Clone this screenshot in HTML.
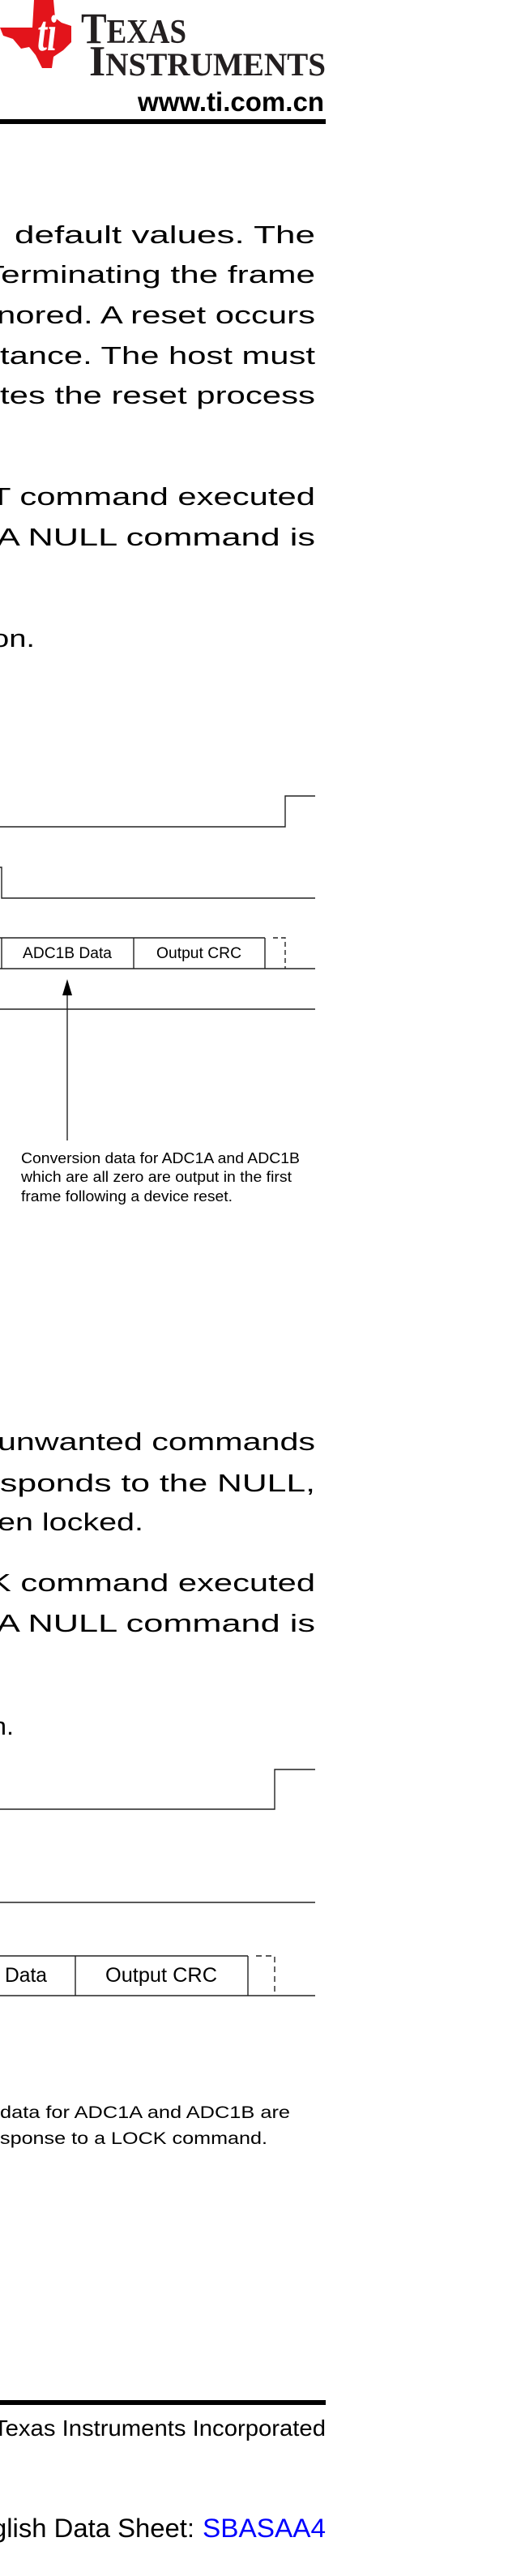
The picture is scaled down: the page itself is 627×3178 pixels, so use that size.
<!DOCTYPE html>
<html><head><meta charset="utf-8"><style>
html,body{margin:0;padding:0;background:#fff;width:627px;height:3178px;overflow:hidden}
svg{display:block}
text{font-family:"Liberation Sans",Arial,sans-serif;fill:#000}
</style></head><body>
<svg width="627" height="3178" viewBox="0 0 627 3178" xmlns="http://www.w3.org/2000/svg">
<!-- Logo -->
<polygon fill="#e3141b" points="42,0 66,0 68,22 76,28 88,32 88,52 78,62 66,70 64,84 52,84 44,68 36,58 26,60 16,48 4,44 0,34 40,34"/>
<text x="46" y="62" font-family="Liberation Serif,serif" font-style="italic" font-weight="bold" font-size="62" style="fill:#fff;font-family:'Liberation Serif',serif" textLength="24" lengthAdjust="spacingAndGlyphs">ti</text>
<text x="100" y="53" style="font-family:'Liberation Serif',serif;fill:#231f20" font-weight="bold" textLength="130" lengthAdjust="spacingAndGlyphs"><tspan font-size="54">T</tspan><tspan font-size="42">EXAS</tspan></text>
<text x="110" y="93" style="font-family:'Liberation Serif',serif;fill:#231f20" font-weight="bold" textLength="292" lengthAdjust="spacingAndGlyphs"><tspan font-size="53">I</tspan><tspan font-size="40">NSTRUMENTS</tspan></text>
<text x="170" y="137" font-size="33" font-weight="bold" textLength="230" lengthAdjust="spacingAndGlyphs">www.ti.com.cn</text>
<rect x="0" y="147" width="402" height="6" fill="#000"/>

<!-- Body paragraph 1 -->
<g font-size="31">
<text x="18" y="300" textLength="371" lengthAdjust="spacingAndGlyphs">default  values.  The</text>
<text x="-20" y="349" textLength="409" lengthAdjust="spacingAndGlyphs">Terminating the frame</text>
<text x="-4" y="399" textLength="393" lengthAdjust="spacingAndGlyphs">nored. A reset occurs</text>
<text x="0" y="449" textLength="389" lengthAdjust="spacingAndGlyphs">tance. The host must</text>
<text x="0" y="498" textLength="389" lengthAdjust="spacingAndGlyphs">tes the reset process</text>
<text x="-12" y="623" textLength="401" lengthAdjust="spacingAndGlyphs">T command executed</text>
<text x="-4" y="673" textLength="393" lengthAdjust="spacingAndGlyphs">A NULL command is</text>
<text x="-10" y="798" textLength="53" lengthAdjust="spacingAndGlyphs">on.</text>
</g>

<!-- Diagram 1 -->
<g stroke="#222" stroke-width="1.4" fill="none">
<polyline points="0,1020 352,1020 352,982 389,982"/>
<polyline points="0,1070 2,1070 2,1108 389,1108"/>
<line x1="0" y1="1157" x2="327" y2="1157"/>
<line x1="0" y1="1195" x2="389" y2="1195"/>
<line x1="2" y1="1157" x2="2" y2="1195"/>
<line x1="165" y1="1157" x2="165" y2="1195"/>
<line x1="327" y1="1157" x2="327" y2="1195"/>
<polyline points="337,1157 352,1157 352,1195" stroke-dasharray="6,4"/>
<line x1="0" y1="1245" x2="389" y2="1245"/>
<line x1="83" y1="1226" x2="83" y2="1407"/>
</g>
<polygon points="83,1208 77,1228 89,1228" fill="#000"/>
<text x="28" y="1182" font-size="19" textLength="110" lengthAdjust="spacingAndGlyphs">ADC1B Data</text>
<text x="193" y="1182" font-size="19" textLength="105" lengthAdjust="spacingAndGlyphs">Output CRC</text>
<g font-size="18.5">
<text x="26" y="1435" textLength="344" lengthAdjust="spacingAndGlyphs">Conversion data for ADC1A and ADC1B</text>
<text x="26" y="1458" textLength="334" lengthAdjust="spacingAndGlyphs">which are all zero are output in the first</text>
<text x="26" y="1482" textLength="261" lengthAdjust="spacingAndGlyphs">frame following a device reset.</text>
</g>

<!-- Body paragraph 2 -->
<g font-size="31">
<text x="-3" y="1789" textLength="392" lengthAdjust="spacingAndGlyphs">unwanted commands</text>
<text x="0" y="1840" textLength="389" lengthAdjust="spacingAndGlyphs">sponds to the NULL,</text>
<text x="-3" y="1888" textLength="180" lengthAdjust="spacingAndGlyphs">en locked.</text>
<text x="-14" y="1963" textLength="403" lengthAdjust="spacingAndGlyphs">K command executed</text>
<text x="-4" y="2013" textLength="393" lengthAdjust="spacingAndGlyphs">A NULL command is</text>
<text x="-10" y="2140" textLength="27" lengthAdjust="spacingAndGlyphs">n.</text>
</g>

<!-- Diagram 2 -->
<g stroke="#222" stroke-width="1.4" fill="none">
<polyline points="0,2232 339,2232 339,2183 389,2183"/>
<line x1="0" y1="2347" x2="389" y2="2347"/>
<line x1="0" y1="2413" x2="306" y2="2413"/>
<line x1="0" y1="2462" x2="389" y2="2462"/>
<line x1="93" y1="2413" x2="93" y2="2462"/>
<line x1="306" y1="2413" x2="306" y2="2462"/>
<polyline points="316,2413 339,2413 339,2462" stroke-dasharray="7,5"/>
</g>
<text x="6" y="2445" font-size="25" textLength="52" lengthAdjust="spacingAndGlyphs">Data</text>
<text x="130" y="2445" font-size="25" textLength="138" lengthAdjust="spacingAndGlyphs">Output CRC</text>
<g font-size="21.5">
<text x="0" y="2613" textLength="358" lengthAdjust="spacingAndGlyphs">data for ADC1A and ADC1B are</text>
<text x="0" y="2645" textLength="330" lengthAdjust="spacingAndGlyphs">sponse to a LOCK command.</text>
</g>

<!-- Footer -->
<rect x="0" y="2961" width="402" height="6" fill="#000"/>
<text x="-8" y="3005" font-size="28" textLength="410" lengthAdjust="spacingAndGlyphs">Texas Instruments Incorporated</text>
<text x="-10" y="3130" font-size="32" textLength="250" lengthAdjust="spacingAndGlyphs">glish Data Sheet: </text>
<text x="250" y="3130" font-size="32" style="fill:#0000ff" textLength="152" lengthAdjust="spacingAndGlyphs">SBASAA4</text>
</svg>
</body></html>
